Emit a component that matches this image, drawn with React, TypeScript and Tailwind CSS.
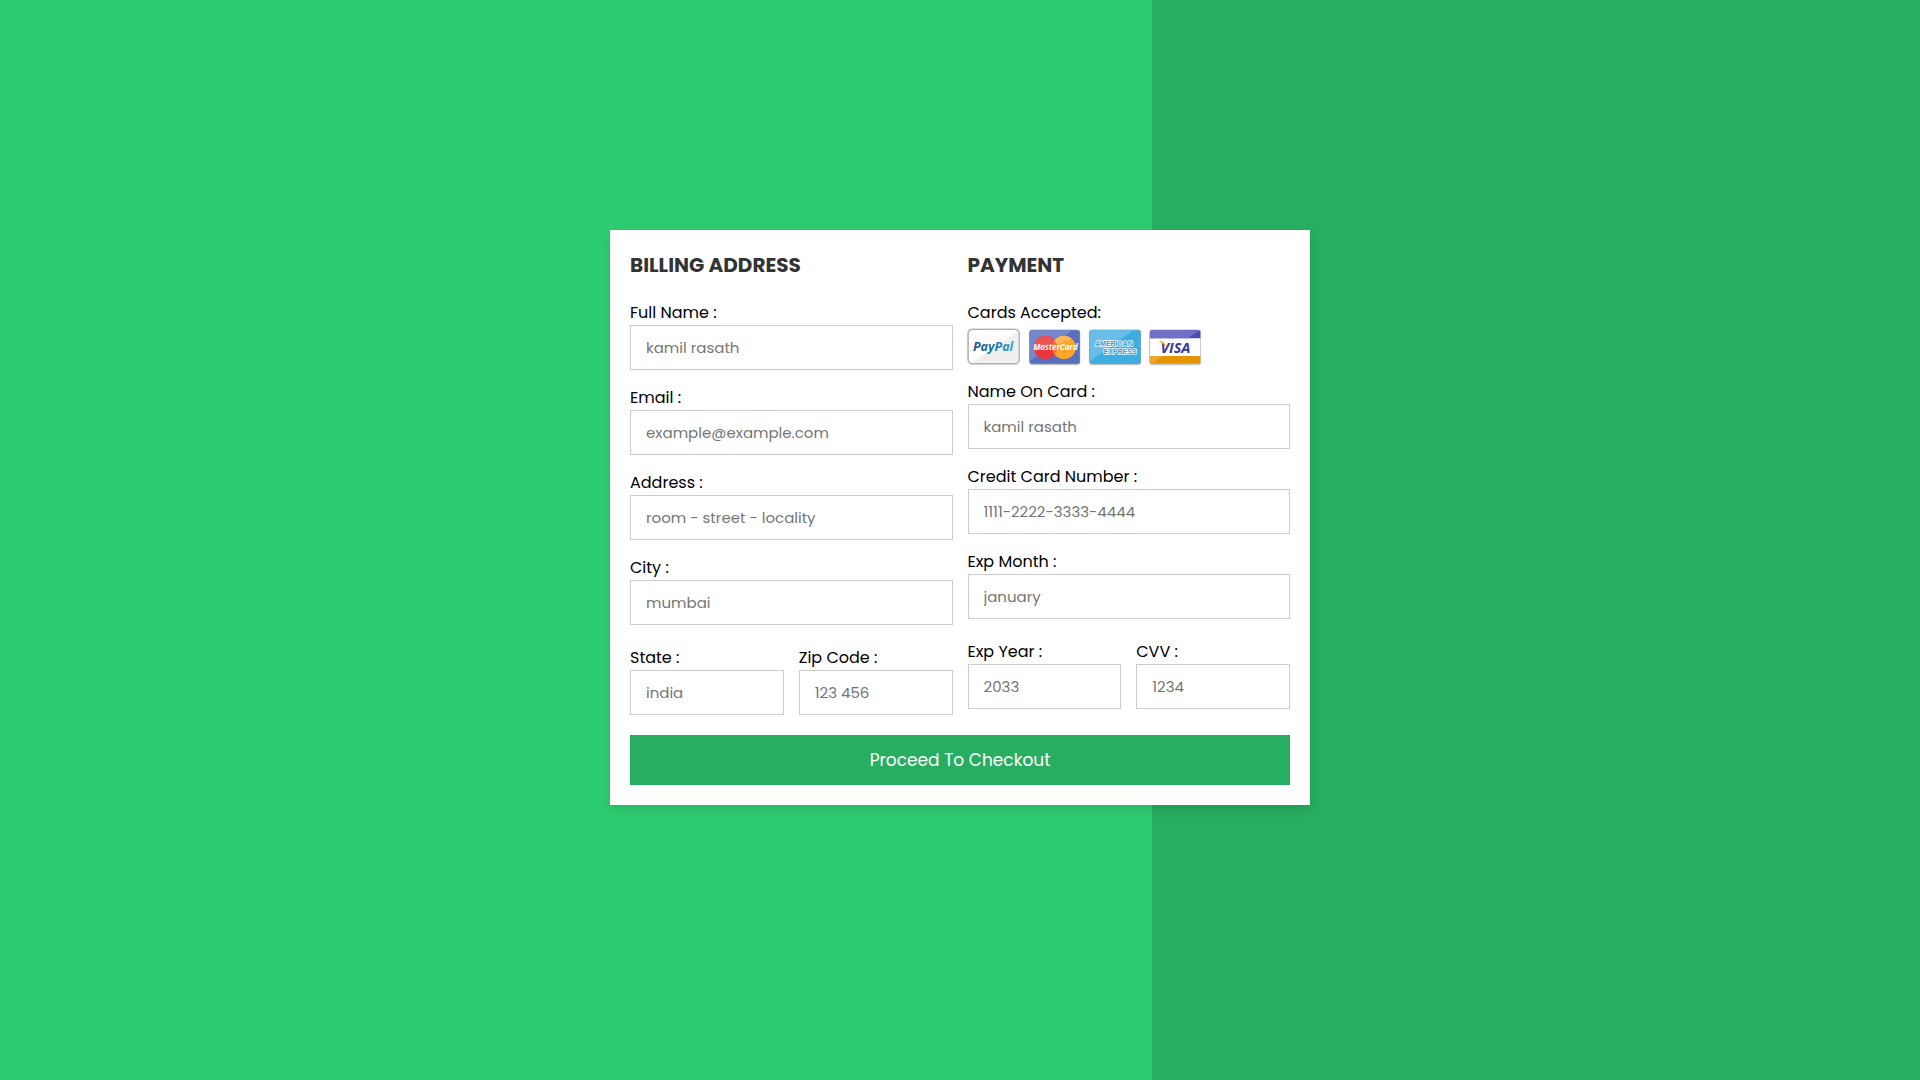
import { useId } from "react";

type FieldProps = { label: string; placeholder: string; type?: string };

function Field({ label, placeholder, type = "text" }: FieldProps) {
  const id = useId();
  return (
    <div className="min-w-0 flex-1">
      <label htmlFor={id} className="block leading-[25px]">
        {label}
      </label>
      <input
        id={id}
        type={type}
        placeholder={placeholder}
        className="block h-[45px] w-full border border-[#ccc] bg-white px-[15px] text-[15px] text-black outline-none placeholder:text-[#757575] focus:border-black"
      />
    </div>
  );
}

function AcceptedCards() {
  return (
    <svg
      role="img"
      aria-label="PayPal, MasterCard, American Express, Visa"
      viewBox="1 1 236 41"
      className="block h-[41px] w-[236px] overflow-visible"
    >
      <defs>
        <linearGradient id="paypal-ink" x1="0" x2="1">
          <stop offset="0" stopColor="#17558f" />
          <stop offset="0.5" stopColor="#1b78a8" />
          <stop offset="1" stopColor="#2ba6cf" />
        </linearGradient>
        <filter id="soft-edge" x="-10%" y="-10%" width="120%" height="130%">
          <feDropShadow dx="0" dy="0.3" stdDeviation="0.7" floodColor="#000" floodOpacity="0.6" />
        </filter>
        <clipPath id="mc-clip">
          <rect x="62.7" y="6.2" width="50" height="33.6" rx="3" />
        </clipPath>
        <clipPath id="amex-clip">
          <rect x="122.7" y="6.2" width="50.8" height="33.6" rx="3" />
        </clipPath>
        <clipPath id="visa-clip">
          <rect x="183" y="6.2" width="50.4" height="33.6" rx="2" />
        </clipPath>
      </defs>

      <g>
        <rect x="1.2" y="5.3" width="50.8" height="34.2" rx="4" fill="#fff" stroke="#b0b0b0" strokeWidth="1.2" filter="url(#soft-edge)" />
        <path d="M51.2 7 V35.5 Q51.2 38.8 48 38.8 H5 Z" fill="#efefef" />
        <text x="6" y="26.5" fontFamily="'Open Sans'" fontWeight="700" fontStyle="italic" fontSize="12.5" fill="url(#paypal-ink)">PayPal</text>
      </g>

      <g>
        <rect x="62.3" y="5.8" width="50.8" height="34.4" rx="3" fill="#9a9fa8" filter="url(#soft-edge)" />
        <rect x="62.7" y="6.2" width="50" height="33.6" rx="3" fill="#586fc0" />
        <path d="M62 38 V5 H107 Z" fill="#7588cc" clipPath="url(#mc-clip)" />
        <circle cx="78.5" cy="23.5" r="11.8" fill="#ea3638" />
        <path d="M67.5 28 A11.8 11.8 0 0 1 86 14.6 L88 17.8 Z" fill="#ee5455" />
        <circle cx="97" cy="23.5" r="11.8" fill="#fba52c" />
        <path d="M85.4 22 A11.8 11.8 0 0 1 104.5 14.4 Z" fill="#fcb65b" />
        <path d="M87.7 16.2 A11.8 11.8 0 0 1 87.7 30.8 A11.8 11.8 0 0 1 87.7 16.2" fill="#f2743a" />
        <text x="66.2" y="26" fontFamily="'Open Sans'" fontWeight="700" fontStyle="italic" fontSize="8" fill="#fff">MasterCard</text>
      </g>

      <g>
        <rect x="122.3" y="5.8" width="51.6" height="34.4" rx="3" fill="#9a9fa8" filter="url(#soft-edge)" />
        <rect x="122.7" y="6.2" width="50.8" height="33.6" rx="3" fill="#3daee0" />
        <path d="M122 38 V5 H168 Z" fill="#68bee8" clipPath="url(#amex-clip)" />
        <g fontFamily="'Liberation Sans'" fontWeight="700" fontSize="7" fill="#2b9fd8" stroke="#fff" strokeWidth="1.3" strokeLinejoin="round" paintOrder="stroke">
          <text x="128" y="22.4">AMERICAN</text>
          <text x="136.5" y="30.4">EXPRESS</text>
        </g>
      </g>

      <g>
        <rect x="182.6" y="5.8" width="51.2" height="34.4" rx="2" fill="#a8a8a8" filter="url(#soft-edge)" />
        <rect x="183" y="6.2" width="50.4" height="33.6" rx="2" fill="#fff" />
        <g clipPath="url(#visa-clip)">
          <path d="M183 5 H234 V14.3 H183 Z" fill="#4f4bb5" />
          <path d="M183 5 H234 L221 14.3 H183 Z" fill="#7270c6" />
          <path d="M183 32 H234 V40 H183 Z" fill="#e59400" />
          <path d="M183 32 H196 L184 40 H183 Z" fill="#eba82d" />
        </g>
        <text x="193.5" y="28.8" fontFamily="'Open Sans'" fontWeight="700" fontStyle="italic" fontSize="14.5" fill="#3a36a0">VISA</text>
        <path d="M192.5 17.3 Q197.5 17.3 198.5 22 Q196.5 19.3 192.5 17.3 Z" fill="#f3b21c" stroke="#f3b21c" strokeWidth="0.9" />
      </g>
    </svg>
  );
}

function Heading({ children }: { children: string }) {
  return <h3 className="text-xl leading-[30px] font-bold text-[#333] uppercase">{children}</h3>;
}

export default function App() {
  return (
    <main
      className="flex min-h-screen items-center justify-center bg-[linear-gradient(90deg,#2ecc71_60%,#27ae60_40.1%)] px-6 pt-[25px] pb-[70px] text-base text-black"
      style={{ fontFamily: "Poppins, Inter, sans-serif" }}
    >
      <form
        className="w-full max-w-[700px] bg-white p-5 shadow-[0_5px_10px_rgba(0,0,0,0.1)]"
        onSubmit={(event) => event.preventDefault()}
      >
        <div className="flex flex-wrap gap-[15px]">
          <section className="min-w-[250px] flex-1">
            <Heading>billing address</Heading>
            <div className="mt-5 flex flex-col gap-[15px]">
              <Field label="Full Name :" placeholder="kamil rasath" />
              <Field label="Email :" placeholder="example@example.com" type="email" />
              <Field label="Address :" placeholder="room - street - locality" />
              <Field label="City :" placeholder="mumbai" />
            </div>
            <div className="mt-5 flex gap-[15px]">
              <Field label="State :" placeholder="india" />
              <Field label="Zip Code :" placeholder="123 456" />
            </div>
          </section>

          <section className="min-w-[250px] flex-1">
            <Heading>payment</Heading>
            <div className="mt-5 flex flex-col gap-[15px]">
              <div className="h-16">
                <p className="leading-[25px]">Cards Accepted:</p>
                <AcceptedCards />
              </div>
              <Field label="Name On Card :" placeholder="kamil rasath" />
              <Field label="Credit Card Number :" placeholder="1111-2222-3333-4444" />
              <Field label="Exp Month :" placeholder="january" />
            </div>
            <div className="mt-5 flex gap-[15px]">
              <Field label="Exp Year :" placeholder="2033" />
              <Field label="CVV :" placeholder="1234" />
            </div>
          </section>
        </div>
        <button
          type="submit"
          className="mt-5 block w-full cursor-pointer bg-[#27ae60] py-3 text-[17px] leading-[26px] text-white hover:bg-[#2ecc71]"
        >
          Proceed To Checkout
        </button>
      </form>
    </main>
  );
}
